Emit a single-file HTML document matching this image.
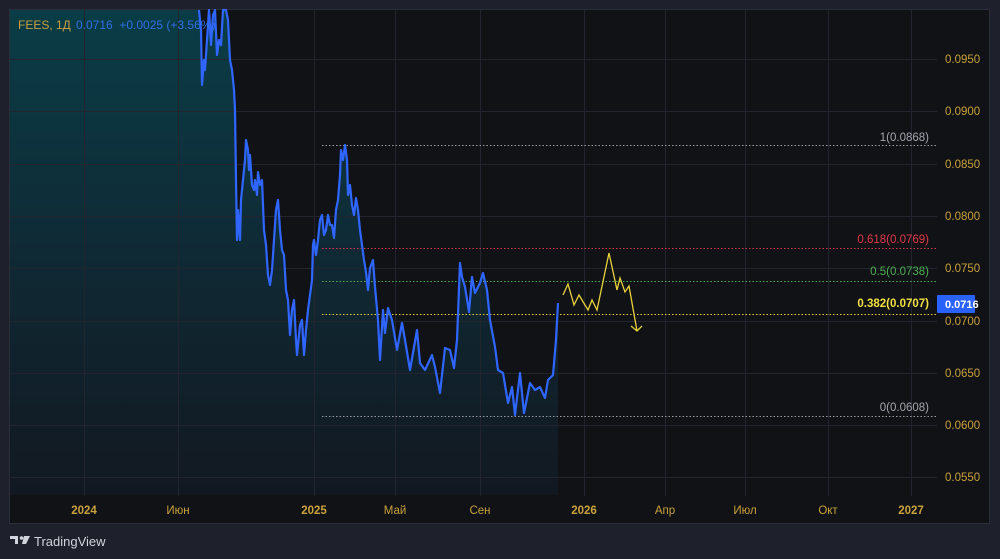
<!DOCTYPE html>
<html><head><meta charset="utf-8"><style>
html,body{margin:0;padding:0;background:#1e212b;width:1000px;height:559px;overflow:hidden;font-family:"Liberation Sans","DejaVu Sans",sans-serif}
</style></head><body>
<svg width="1000" height="559" viewBox="0 0 1000 559" xmlns="http://www.w3.org/2000/svg" style="position:absolute;left:0;top:0">
<defs>
<linearGradient id="g" x1="0" y1="0" x2="0" y2="1">
<stop offset="0" stop-color="#0a3d47"/>
<stop offset="0.5" stop-color="#0f2a35"/>
<stop offset="1" stop-color="#121821"/>
</linearGradient>
</defs>
<rect x="9.5" y="9.5" width="980" height="514" fill="#111216" stroke="#2a2e39"/>
<path fill="url(#g)" d="M10,10 L199,10 L201,30 L202,85 L204,60 L205,70 L207,40 L209,10 L211,45 L213,15 L215,10 L217,55 L219,40 L221,45 L223,10 L226,10 L228,20 L230,60 L232,70 L234,90 L235,110 L236,180 L237,240 L238,210 L240,240 L241,200 L243,180 L245,160 L246,140 L248,150 L249,170 L250,155 L252,185 L254,190 L255,180 L257,195 L258,172 L260,185 L262,180 L264,230 L266,245 L268,275 L270,285 L272,270 L274,240 L276,210 L278,200 L280,230 L282,250 L284,255 L286,290 L288,300 L290,335 L292,310 L294,300 L296,340 L297,355 L300,325 L302,320 L304,355 L306,330 L308,310 L310,295 L312,280 L313,245 L314,240 L316,255 L318,240 L320,220 L322,215 L324,235 L326,230 L328,215 L330,225 L332,225 L334,238 L336,210 L338,200 L340,175 L341,150 L343,160 L345,145 L347,160 L348,195 L350,185 L352,205 L354,215 L356,198 L358,210 L360,230 L362,245 L364,260 L366,272 L368,290 L370,268 L373,260 L375,287 L378,320 L380,360 L383,310 L385,333 L388,308 L392,320 L397,350 L402,323 L405,340 L410,370 L417,330 L420,363 L425,370 L432,355 L435,367 L440,393 L445,348 L450,350 L454,368 L457,340 L460,263 L462,277 L465,287 L469,312 L472,277 L475,293 L480,283 L483,273 L487,290 L490,320 L495,347 L498,370 L503,373 L508,403 L512,387 L515,415 L520,373 L524,413 L530,383 L535,390 L540,387 L545,398 L548,380 L553,375 L556,340 L558,303 L558,495 L10,495 Z"/>
<g stroke="#22252e" stroke-width="1">
<line x1="10" y1="59.5" x2="937" y2="59.5"/><line x1="10" y1="111.5" x2="937" y2="111.5"/><line x1="10" y1="164.5" x2="937" y2="164.5"/><line x1="10" y1="216.5" x2="937" y2="216.5"/><line x1="10" y1="268.5" x2="937" y2="268.5"/><line x1="10" y1="321.5" x2="937" y2="321.5"/><line x1="10" y1="373.5" x2="937" y2="373.5"/><line x1="10" y1="425.5" x2="937" y2="425.5"/><line x1="10" y1="477.5" x2="937" y2="477.5"/>
<line x1="84.5" y1="10" x2="84.5" y2="496"/><line x1="178.5" y1="10" x2="178.5" y2="496"/><line x1="314.5" y1="10" x2="314.5" y2="496"/><line x1="395.5" y1="10" x2="395.5" y2="496"/><line x1="480.5" y1="10" x2="480.5" y2="496"/><line x1="584.5" y1="10" x2="584.5" y2="496"/><line x1="665.5" y1="10" x2="665.5" y2="496"/><line x1="745.5" y1="10" x2="745.5" y2="496"/><line x1="828.5" y1="10" x2="828.5" y2="496"/><line x1="911.5" y1="10" x2="911.5" y2="496"/>
</g>
<g stroke-width="1" stroke-dasharray="1.5 2">
<line x1="322" y1="145.5" x2="938" y2="145.5" stroke="#9a9ca3"/>
<line x1="322" y1="248.5" x2="938" y2="248.5" stroke="#d0394a"/>
<line x1="322" y1="281.5" x2="938" y2="281.5" stroke="#4caf50"/>
<line x1="322" y1="314.5" x2="938" y2="314.5" stroke="#e8d23a"/>
<line x1="322" y1="416.5" x2="938" y2="416.5" stroke="#9a9ca3"/>
</g>
<g font-size="11.5" text-anchor="end">
<text x="929" y="141" fill="#a3a6ad">1(0.0868)</text>
<text x="929" y="243" fill="#e0394a">0.618(0.0769)</text>
<text x="929" y="275" fill="#4caf50">0.5(0.0738)</text>
<text x="929" y="307" fill="#f0e040" font-weight="bold">0.382(0.0707)</text>
<text x="929" y="411" fill="#a3a6ad">0(0.0608)</text>
</g>
<path fill="none" stroke="#2f66ff" stroke-width="2.2" stroke-linejoin="round" d="M199,10 L201,30 L202,85 L204,60 L205,70 L207,40 L209,10 L211,45 L213,15 L215,10 L217,55 L219,40 L221,45 L223,10 L226,10 L228,20 L230,60 L232,70 L234,90 L235,110 L236,180 L237,240 L238,210 L240,240 L241,200 L243,180 L245,160 L246,140 L248,150 L249,170 L250,155 L252,185 L254,190 L255,180 L257,195 L258,172 L260,185 L262,180 L264,230 L266,245 L268,275 L270,285 L272,270 L274,240 L276,210 L278,200 L280,230 L282,250 L284,255 L286,290 L288,300 L290,335 L292,310 L294,300 L296,340 L297,355 L300,325 L302,320 L304,355 L306,330 L308,310 L310,295 L312,280 L313,245 L314,240 L316,255 L318,240 L320,220 L322,215 L324,235 L326,230 L328,215 L330,225 L332,225 L334,238 L336,210 L338,200 L340,175 L341,150 L343,160 L345,145 L347,160 L348,195 L350,185 L352,205 L354,215 L356,198 L358,210 L360,230 L362,245 L364,260 L366,272 L368,290 L370,268 L373,260 L375,287 L378,320 L380,360 L383,310 L385,333 L388,308 L392,320 L397,350 L402,323 L405,340 L410,370 L417,330 L420,363 L425,370 L432,355 L435,367 L440,393 L445,348 L450,350 L454,368 L457,340 L460,263 L462,277 L465,287 L469,312 L472,277 L475,293 L480,283 L483,273 L487,290 L490,320 L495,347 L498,370 L503,373 L508,403 L512,387 L515,415 L520,373 L524,413 L530,383 L535,390 L540,387 L545,398 L548,380 L553,375 L556,340 L558,303"/>
<path fill="none" stroke="#e8d23a" stroke-width="1.3" d="M563,295 L568,284 L574,305 L579,295 L588,310 L592,300 L597,310 L609,253 L617,290 L620,278 L625,292 L629,286 L637,331 M631,326 L637,331 L642,326"/>
<text x="18" y="29" font-size="12" fill="#c8a040">FEES, 1Д</text>
<text x="76" y="29" font-size="12" fill="#2f6ee8">0.0716 &#160;+0.0025 (+3.56%)</text>
<g font-size="11.5" fill="#c9a23c">
<text x="945" y="63">0.0950</text><text x="945" y="115">0.0900</text><text x="945" y="168">0.0850</text><text x="945" y="220">0.0800</text><text x="945" y="272">0.0750</text><text x="945" y="325">0.0700</text><text x="945" y="377">0.0650</text><text x="945" y="429">0.0600</text><text x="945" y="481">0.0550</text>
</g>
<rect x="937" y="295" width="38" height="18" rx="1" fill="#2962ff"/>
<text x="945" y="308" font-size="11" fill="#fff" font-weight="bold">0.0716</text>
<g font-size="11.5" fill="#c9a23c" text-anchor="middle">
<text x="84" y="514" font-weight="bold">2024</text><text x="178" y="514">Июн</text><text x="314" y="514" font-weight="bold">2025</text><text x="395" y="514">Май</text><text x="480" y="514">Сен</text><text x="584" y="514" font-weight="bold">2026</text><text x="665" y="514">Апр</text><text x="745" y="514">Июл</text><text x="828" y="514">Окт</text><text x="911" y="514" font-weight="bold">2027</text>
</g>
<g fill="#d1d4dc">
<path d="M10,536 h8 v8 h-3 v-5 h-5z"/>
<circle cx="21.5" cy="538" r="1.8"/>
<path d="M24,536 h6 l-4,8 h-4z"/>
</g>
<text x="34" y="546" font-size="13" fill="#d1d4dc">TradingView</text>
</svg>
</body></html>
